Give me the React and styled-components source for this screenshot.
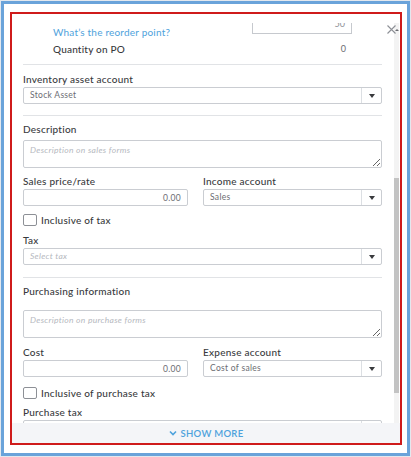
import React from 'react';
import styled, { createGlobalStyle } from 'styled-components';

const GlobalStyle = createGlobalStyle`
	html, body {
		margin: 0;
		padding: 0;
	}
	body {
		background: #e3e8ee;
		font-family: Lato, "Open Sans", sans-serif;
	}
`;

function Chevron({ color = '#4ea2dc' }) {
	return (
		<svg width="8" height="6" viewBox="0 0 8 6">
			<path d="M1 1.5 L4 4.5 L7 1.5" fill="none" stroke={color} strokeWidth="1.6" />
		</svg>
	);
}

function Select({ value, placeholder }) {
	return (
		<SelectBox>
			<SelectValue $placeholder={!value}>{value || placeholder}</SelectValue>
			<ArrowCell>
				<svg width="6" height="4" viewBox="0 0 6 4">
					<path d="M0 0 H6 L3 4 Z" fill="#393a3d" />
				</svg>
			</ArrowCell>
		</SelectBox>
	);
}

function Check({ label, top }) {
	return (
		<CheckRow $top={top}>
			<CheckBox />
			<CheckLabel>{label}</CheckLabel>
		</CheckRow>
	);
}

export default function App() {
	return (
		<>
			<GlobalStyle />
			<Window>
				<Panel>
					<Header />
					<CloseButton>
						<svg width="9" height="9" viewBox="0 0 9 9">
							<path d="M0.5 0.5 L8.5 8.5 M8.5 0.5 L0.5 8.5" stroke="#8d9096" strokeWidth="1.1" />
						</svg>
					</CloseButton>
					<ScrollArea>
						<Viewport>
							<Content>
								<ReorderRow $h={22}>
									<LinkText>What’s the reorder point?</LinkText>
									<QtyBox>50</QtyBox>
								</ReorderRow>
								<ReorderRow $top={5}>
									<PlainText>Quantity on PO</PlainText>
									<QtyValue>0</QtyValue>
								</ReorderRow>

								<Divider $top={9} />

								<Label $top={8}>Inventory asset account</Label>
								<Select value="Stock Asset" />

								<Divider $top={11} />

								<Label $top={7}>Description</Label>
								<TextArea placeholder="Description on sales forms" $gap={5} />

								<Columns $top={7}>
									<div>
										<Label>Sales price/rate</Label>
										<AmountInput readOnly value="0.00" />
									</div>
									<div>
										<Label>Income account</Label>
										<Select value="Sales" />
									</div>
								</Columns>

								<Check label="Inclusive of tax" top={8} />

								<Label $top={8}>Tax</Label>
								<Select placeholder="Select tax" />

								<Divider $top={12} />

								<Label $top={7}>Purchasing information</Label>
								<TextArea placeholder="Description on purchase forms" $gap={13} />

								<Columns $top={8}>
									<div>
										<Label>Cost</Label>
										<AmountInput readOnly value="0.00" />
									</div>
									<div>
										<Label>Expense account</Label>
										<Select value="Cost of sales" />
									</div>
								</Columns>

								<Check label="Inclusive of purchase tax" top={10} />

								<Label $top={7}>Purchase tax</Label>
								<Select />
							</Content>
						</Viewport>
						<Track>
							<TrackArrow />
							<Thumb />
						</Track>
					</ScrollArea>
					<Footer>
						<Chevron />
						<ShowMore>SHOW MORE</ShowMore>
					</Footer>
				</Panel>
			</Window>
		</>
	);
}

const Window = styled.div`
	box-sizing: border-box;
	width: 409px;
	height: 455px;
	margin: 1px 0 0 1px;
	border: 3px solid #6aa3da;
	background: #fff;
	padding: 8px 5px 8px 6px;
`;

const Panel = styled.div`
	position: relative;
	box-sizing: border-box;
	width: 392px;
	height: 433px;
	border: 2px solid #cf1b1b;
	display: flex;
	flex-direction: column;
	background: #fff;
`;

const Header = styled.div`
	height: 9px;
	flex: none;
`;

const CloseButton = styled.div`
	position: absolute;
	top: 11px;
	left: 375px;
	line-height: 0;
`;

const ScrollArea = styled.div`
	flex: 1;
	display: flex;
	overflow: hidden;
`;

const Viewport = styled.div`
	flex: 1;
	overflow: hidden;
	padding: 0 12px 0 11px;
`;

const Content = styled.div`
	margin-top: -7px;
`;

const Track = styled.div`
	width: 5px;
	margin-right: 1px;
	background: #f3f3f3;
	display: flex;
	flex-direction: column;
	align-items: center;
`;

const TrackArrow = styled.div`
	margin-top: 6px;
	width: 0;
	height: 0;
	border-left: 2px solid transparent;
	border-right: 2px solid transparent;
	border-bottom: 2px solid #6b6c72;
`;

const Thumb = styled.div`
	margin-top: 147px;
	width: 5px;
	height: 215px;
	background: #c3c3c3;
`;

const ReorderRow = styled.div`
	display: flex;
	justify-content: space-between;
	align-items: flex-start;
	padding: 0 30px;
	height: ${(p) => (p.$h ? `${p.$h}px` : 'auto')};
	margin-top: ${(p) => p.$top || 0}px;
	font-size: 10px;
	line-height: 12px;
`;

const LinkText = styled.span`
	margin-top: 10px;
	color: #4ea2dc;
	letter-spacing: 0.2px;
`;

const PlainText = styled.span`
	color: #393a3d;
	font-weight: 500;
	letter-spacing: 0.2px;
`;

const QtyBox = styled.div`
	box-sizing: border-box;
	width: 100px;
	height: 18px;
	border: 1px solid #c6c9ce;
	border-top: none;
	padding: 2px 6px 0;
	text-align: right;
	font-size: 9px;
	line-height: 12px;
	color: #8d9096;
`;

const QtyValue = styled.span`
	padding-right: 6px;
	font-size: 9px;
	color: #6b6c72;
`;

const Divider = styled.div`
	height: 1px;
	background: #e1e3e6;
	margin-top: ${(p) => p.$top}px;
`;

const Label = styled.div`
	margin-top: ${(p) => p.$top || 0}px;
	margin-bottom: 2px;
	font-size: 10px;
	line-height: 12px;
	font-weight: 500;
	letter-spacing: 0.25px;
	color: #393a3d;
`;

const SelectBox = styled.div`
	box-sizing: border-box;
	display: flex;
	height: 17px;
	border: 1px solid #cacdd2;
	border-radius: 2px;
	background: #fff;
`;

const SelectValue = styled.div`
	flex: 1;
	padding-left: 6px;
	font-size: 8.5px;
	line-height: 15px;
	letter-spacing: 0.3px;
	color: ${(p) => (p.$placeholder ? '#b5b8be' : '#6b6c72')};
	font-style: ${(p) => (p.$placeholder ? 'italic' : 'normal')};
`;

const ArrowCell = styled.div`
	width: 19px;
	border-left: 1px solid #dcdfe3;
	display: flex;
	align-items: center;
	justify-content: center;
`;

const TextArea = styled.textarea`
	display: block;
	box-sizing: border-box;
	width: 100%;
	height: 28px;
	margin: ${(p) => p.$gap}px 0 0;
	padding: 4px 6px;
	border: 1px solid #cacdd2;
	border-radius: 2px;
	font-family: Lato, "Open Sans", sans-serif;
	font-size: 8.5px;
	letter-spacing: 0.3px;
	resize: vertical;
	outline: none;

	&::placeholder {
		color: #b5b8be;
		font-style: italic;
	}
`;

const Columns = styled.div`
	display: grid;
	grid-template-columns: 165px 1fr;
	column-gap: 15px;
	margin-top: ${(p) => p.$top}px;
`;

const AmountInput = styled.input`
	display: block;
	box-sizing: border-box;
	width: 100%;
	height: 17px;
	margin: 0;
	padding: 0 6px;
	border: 1px solid #cacdd2;
	border-radius: 2px;
	text-align: right;
	font-family: Lato, "Open Sans", sans-serif;
	font-size: 8.5px;
	letter-spacing: 0.3px;
	color: #6b6c72;
	outline: none;
`;

const CheckRow = styled.div`
	display: flex;
	align-items: center;
	gap: 4px;
	margin-top: ${(p) => p.$top}px;
`;

const CheckBox = styled.span`
	box-sizing: border-box;
	width: 14px;
	height: 12px;
	border: 1px solid #8d9096;
	border-radius: 2px;
`;

const CheckLabel = styled.span`
	font-size: 10px;
	line-height: 12px;
	font-weight: 500;
	letter-spacing: 0.25px;
	color: #393a3d;
`;

const Footer = styled.div`
	flex: none;
	height: 20px;
	background: #f4f5f8;
	display: flex;
	align-items: center;
	justify-content: center;
	gap: 4px;
`;

const ShowMore = styled.span`
	font-size: 9.5px;
	font-weight: 600;
	letter-spacing: 0.3px;
	color: #4ea2dc;
`;
